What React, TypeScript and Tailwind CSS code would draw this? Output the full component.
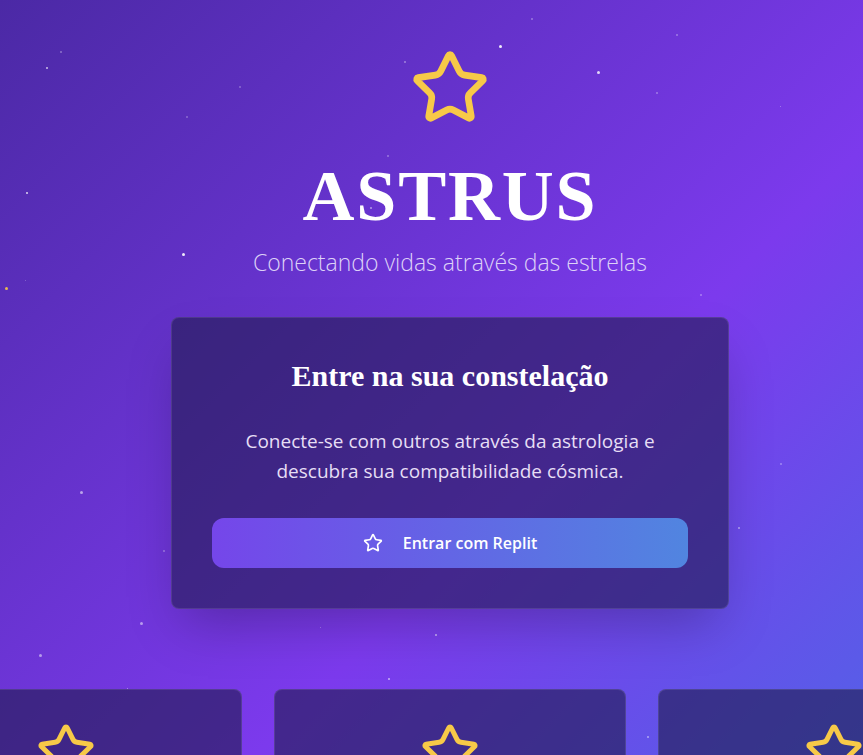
import React from "react";

const StarIcon = ({ className, strokeWidth = 2 }: { className?: string; strokeWidth?: number }) => (
  <svg
    viewBox="0 0 24 24"
    fill="none"
    stroke="currentColor"
    strokeWidth={strokeWidth}
    strokeLinecap="round"
    strokeLinejoin="round"
    className={className}
  >
    <path d="M11.525 2.295a.53.53 0 0 1 .95 0l2.31 4.679a2.123 2.123 0 0 0 1.595 1.16l5.166.756a.53.53 0 0 1 .294.904l-3.736 3.638a2.123 2.123 0 0 0-.611 1.878l.882 5.14a.53.53 0 0 1-.771.56l-4.618-2.428a2.122 2.122 0 0 0-1.973 0L6.396 21.01a.53.53 0 0 1-.77-.56l.881-5.139a2.122 2.122 0 0 0-.611-1.879L2.16 9.795a.53.53 0 0 1 .294-.906l5.165-.755a2.122 2.122 0 0 0 1.597-1.16z" />
  </svg>
);

const dots: { x: number; y: number; s: number; o: number; c?: string }[] = [
  { x: 500, y: 46, s: 3, o: 0.9 },
  { x: 598, y: 72, s: 3, o: 0.8 },
  { x: 657, y: 93, s: 2, o: 0.35 },
  { x: 677, y: 35, s: 2, o: 0.35 },
  { x: 780, y: 106, s: 1, o: 0.4 },
  { x: 701, y: 295, s: 2, o: 0.35 },
  { x: 532, y: 19, s: 2, o: 0.35 },
  { x: 405, y: 62, s: 2, o: 0.4 },
  { x: 388, y: 156, s: 2, o: 0.35 },
  { x: 371, y: 208, s: 2, o: 0.5 },
  { x: 61, y: 52, s: 2, o: 0.35 },
  { x: 47, y: 68, s: 2, o: 0.7 },
  { x: 240, y: 87, s: 2, o: 0.3 },
  { x: 187, y: 117, s: 2, o: 0.3 },
  { x: 27, y: 193, s: 2, o: 0.8 },
  { x: 183, y: 254, s: 3, o: 0.9 },
  { x: 6, y: 288, s: 3, o: 0.9, c: "#f6c944" },
  { x: 25, y: 280, s: 1, o: 0.3 },
  { x: 81, y: 492, s: 3, o: 0.55 },
  { x: 164, y: 551, s: 2, o: 0.35 },
  { x: 141, y: 623, s: 3, o: 0.5 },
  { x: 40, y: 655, s: 3, o: 0.5 },
  { x: 127, y: 688, s: 1, o: 0.5 },
  { x: 781, y: 464, s: 2, o: 0.35 },
  { x: 739, y: 528, s: 2, o: 0.5 },
  { x: 320, y: 627, s: 1, o: 0.4 },
  { x: 436, y: 635, s: 2, o: 0.6 },
  { x: 389, y: 679, s: 2, o: 0.6 },
  { x: 648, y: 737, s: 2, o: 0.5 },
];

const features = ["mapa", "compat", "conexoes"];

export default function App() {
  return (
    <div className="w-full h-screen overflow-hidden">
      <div
        className="relative w-[900px] h-[1120px] bg-[linear-gradient(135deg,#4b29a5_0%,#7c3aed_50%,#3a7ae3_100%)] flex flex-col items-center pt-12"
        style={{ fontFamily: '"Segoe UI", "Open Sans", "Noto Sans", sans-serif' }}
      >
        {dots.map((d, i) => (
          <span
            key={i}
            className="absolute rounded-full"
            style={{
              left: d.x - d.s / 2,
              top: d.y - d.s / 2,
              width: d.s,
              height: d.s,
              opacity: d.o,
              backgroundColor: d.c ?? "#ffffff",
            }}
          />
        ))}

        <StarIcon className="relative w-20 h-20 text-[#f7c948] mb-8" />

        <h1
          className="relative text-7xl leading-none tracking-wide font-bold text-white mb-4"
          style={{ fontFamily: '"Liberation Serif", "Times New Roman", serif' }}
        >
          ASTRUS
        </h1>
        <p className="relative text-[23px] leading-7 font-light text-[#ddd1f7]">
          Conectando vidas através das estrelas
        </p>

        <div className="relative mt-[41px] w-[558px] rounded-lg border border-white/10 bg-indigo-950/60 shadow-2xl p-10 flex flex-col items-center text-center">
          <h2
            className="text-3xl leading-9 font-bold text-white mb-8"
            style={{ fontFamily: '"Liberation Serif", "Times New Roman", serif' }}
          >
            Entre na sua constelação
          </h2>
          <p className="max-w-[440px] text-[19px] leading-[30px] text-[#e6def5] mb-8">
            Conecte-se com outros através da astrologia e descubra sua compatibilidade cósmica.
          </p>
          <button className="w-full h-[50px] rounded-xl bg-[linear-gradient(90deg,#7546ea,#5185e0)] flex items-center justify-center gap-5 text-white font-semibold text-base">
            <StarIcon className="w-5 h-5" />
            <span>Entrar com Replit</span>
          </button>
        </div>

        <div className="relative mt-[80px] w-[1120px] shrink-0 grid grid-cols-3 gap-8">
          {features.map((f) => (
            <div
              key={f}
              className="h-[240px] rounded-lg border border-white/10 bg-indigo-950/60 p-8 flex flex-col items-center"
            >
              <StarIcon className="w-15 h-15 text-[#f7c948]" />
            </div>
          ))}
        </div>
      </div>
    </div>
  );
}
